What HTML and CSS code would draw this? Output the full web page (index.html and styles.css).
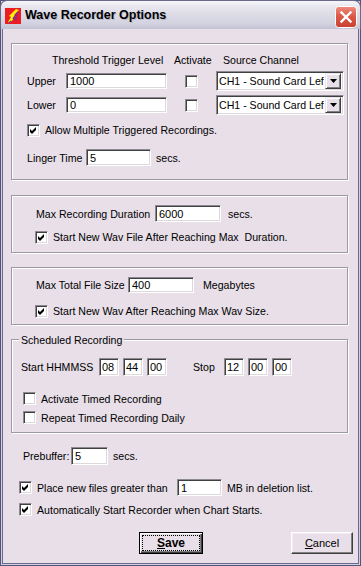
FILE: index.html
```html
<!DOCTYPE html>
<html>
<head>
<meta charset="utf-8">
<title>Wave Recorder Options</title>
<link rel="stylesheet" href="styles.css">
</head>
<body>
<div class="window">
  <div class="titlebar">
    <svg class="app-icon" width="16" height="16" viewBox="0 0 16 16">
      <rect width="16" height="16" fill="#ec1c24"/>
      <polygon points="11,1 14,2 9,7 11,8 5,15 3,14 6,9 4,8" fill="#fff200"/>
      <path d="M13 4 L8 11 M6 13 L4 15 M12 9 L10 12" stroke="#7a2a9a" stroke-width="1.6"/>
    </svg>
    <span class="title">Wave Recorder Options</span>
    <div class="close">
      <svg width="22" height="22" viewBox="0 0 22 22">
        <defs>
          <linearGradient id="red" x1="0" y1="0" x2="0" y2="1">
            <stop offset="0" stop-color="#ee8e80"/>
            <stop offset="0.45" stop-color="#dc5a48"/>
            <stop offset="1" stop-color="#c84030"/>
          </linearGradient>
        </defs>
        <rect x="0.5" y="0.5" width="21" height="21" rx="3" fill="url(#red)" stroke="#fff"/>
        <path d="M6.5 6.5 L15.5 15.5 M15.5 6.5 L6.5 15.5" stroke="#fff" stroke-width="2.4" stroke-linecap="square"/>
      </svg>
    </div>
  </div>

  <div class="client">
    <div class="group trigger">
      <div class="row head">
        <span class="h-level">Threshold Trigger Level</span>
        <span class="h-act">Activate</span>
        <span>Source Channel</span>
      </div>
      <div class="row level">
        <span class="lbl-level">Upper</span>
        <div class="edit level-edit">1000</div>
        <span class="check act"></span>
        <div class="combo">
          <span class="combo-text">CH1 - Sound Card Lef</span>
          <span class="drop"><svg width="7" height="4" viewBox="0 0 7 4"><polygon points="0,0 7,0 3.5,4" fill="#000"/></svg></span>
        </div>
      </div>
      <div class="row level second">
        <span class="lbl-level">Lower</span>
        <div class="edit level-edit">0</div>
        <span class="check act"></span>
        <div class="combo">
          <span class="combo-text">CH1 - Sound Card Lef</span>
          <span class="drop"><svg width="7" height="4" viewBox="0 0 7 4"><polygon points="0,0 7,0 3.5,4" fill="#000"/></svg></span>
        </div>
      </div>
      <div class="row opt allow">
        <span class="check on"><svg width="7" height="7" viewBox="0 0 7 7"><polygon points="0,2 2,4 6,0 6,3 2,7 0,5" fill="#000"/></svg></span>
        <span>Allow Multiple Triggered Recordings.</span>
      </div>
      <div class="row linger">
        <span class="lbl-linger">Linger Time</span>
        <div class="edit linger-edit">5</div>
        <span class="unit">secs.</span>
      </div>
    </div>

    <div class="group limit">
      <div class="row field">
        <span class="lbl-dur">Max Recording Duration</span>
        <div class="edit num-edit">6000</div>
        <span class="unit">secs.</span>
      </div>
      <div class="row opt">
        <span class="check on"><svg width="7" height="7" viewBox="0 0 7 7"><polygon points="0,2 2,4 6,0 6,3 2,7 0,5" fill="#000"/></svg></span>
        <span>Start New Wav File After Reaching Max&nbsp; Duration.</span>
      </div>
    </div>

    <div class="group limit size">
      <div class="row field">
        <span class="lbl-size">Max Total File Size</span>
        <div class="edit num-edit">400</div>
        <span class="unit mb">Megabytes</span>
      </div>
      <div class="row opt">
        <span class="check on"><svg width="7" height="7" viewBox="0 0 7 7"><polygon points="0,2 2,4 6,0 6,3 2,7 0,5" fill="#000"/></svg></span>
        <span>Start New Wav After Reaching Max Wav Size.</span>
      </div>
    </div>

    <div class="group sched">
      <span class="legend">Scheduled Recording</span>
      <div class="row time">
        <span class="lbl-start">Start HHMMSS</span>
        <div class="edit t-edit">08</div>
        <div class="edit t-edit">44</div>
        <div class="edit t-edit">00</div>
        <span class="lbl-stop">Stop</span>
        <div class="edit t-edit">12</div>
        <div class="edit t-edit">00</div>
        <div class="edit t-edit">00</div>
      </div>
      <div class="row opt timed">
        <span class="check"></span>
        <span>Activate Timed Recording</span>
      </div>
      <div class="row opt timed daily">
        <span class="check"></span>
        <span>Repeat Timed Recording Daily</span>
      </div>
    </div>

    <div class="row prebuffer">
      <span class="lbl-pre">Prebuffer:</span>
      <div class="edit pre-edit">5</div>
      <span class="unit">secs.</span>
    </div>
    <div class="row opt place">
      <span class="check on"><svg width="7" height="7" viewBox="0 0 7 7"><polygon points="0,2 2,4 6,0 6,3 2,7 0,5" fill="#000"/></svg></span>
      <span class="lbl-place">Place new files greater than</span>
      <div class="edit mb-edit">1</div>
      <span class="unit">MB in deletion list.</span>
    </div>
    <div class="row opt auto">
      <span class="check on"><svg width="7" height="7" viewBox="0 0 7 7"><polygon points="0,2 2,4 6,0 6,3 2,7 0,5" fill="#000"/></svg></span>
      <span>Automatically Start Recorder when Chart Starts.</span>
    </div>

    <div class="row buttons">
      <div class="btn default"><span class="focus"><u>S</u>ave</span></div>
      <div class="btn cancel"><u>C</u>ancel</div>
    </div>
  </div>
</div>
</body>
</html>
```

FILE: styles.css
```css
* {
  margin: 0;
  padding: 0;
  box-sizing: border-box;
}

body {
  background: #fff;
  font-family: "Liberation Sans", Arial, sans-serif;
  font-size: 10.6px;
  color: #000;
}

.window {
  width: 361px;
  height: 566px;
  background: #e8dfe8;
  box-shadow: inset 0 0 0 1px #55557a, inset 0 0 0 2px #cfcfe0, inset 0 0 0 3px #6c6c90;
}

/* title bar */
.titlebar {
  height: 29px;
  display: flex;
  align-items: center;
  border: 1px solid #6a6a8c;
  border-bottom: none;
  border-radius: 7px 7px 0 0;
  background: linear-gradient(to bottom, #f7f7fb 0%, #e9e8f0 18%, #dcdbe6 50%, #d3d2e0 80%, #c4c3d4 100%);
}

.app-icon {
  margin-left: 4px;
  margin-top: 1px;
}

.title {
  margin-left: 4px;
  font-weight: bold;
  font-size: 12.5px;
  text-shadow: 1px 1px 0 rgba(120, 120, 150, 0.35);
}

.close {
  margin-left: auto;
  margin-right: 3px;
  margin-top: 3px;
  height: 22px;
}

/* client area */
.client {
  padding: 14px 13px 0 11px;
}

.row {
  display: flex;
  align-items: center;
  white-space: nowrap;
}

.row > span {
  flex: none;
}

.group {
  border: 1px solid #9c98a4;
  box-shadow: inset 1px 1px #fff, 1px 1px #fff;
}

/* sunken controls */
.edit {
  flex: none;
  background: #fff;
  border: 1px solid;
  border-color: #8c8a90 #fff #fff #8c8a90;
  box-shadow: inset 1px 1px #404040, inset -1px -1px #dcd8dc;
  padding: 0 3px;
  display: flex;
  align-items: center;
  white-space: nowrap;
  font-size: 11px;
}

.check {
  width: 13px;
  height: 13px;
  flex: none;
  background: #fff;
  border: 1px solid;
  border-color: #8c8a90 #fff #fff #8c8a90;
  box-shadow: inset 1px 1px #404040, inset -1px -1px #dcd8dc;
  display: flex;
  align-items: center;
  justify-content: center;
}

.opt .check {
  margin-right: 5px;
}

/* threshold group */
.trigger {
  height: 137px;
  padding-top: 9px;
}

.head {
  height: 14px;
  padding-left: 40px;
}

.h-level {
  width: 122px;
}

.h-act {
  width: 49px;
}

.level {
  height: 20px;
  margin-top: 4px;
  padding-left: 15px;
}

.lbl-level {
  width: 39px;
}

.level-edit {
  width: 101px;
  height: 16px;
}

.act {
  margin-left: 18px;
}

.combo {
  flex: none;
  width: 128px;
  height: 20px;
  margin-left: 18px;
  background: #fff;
  border: 1px solid;
  border-color: #8c8a90 #fff #fff #8c8a90;
  box-shadow: inset 1px 1px #404040, inset -1px -1px #dcd8dc;
  padding: 2px;
  display: flex;
  align-items: center;
}

.combo-text {
  flex: 1;
  overflow: hidden;
  white-space: nowrap;
  font-size: 10.6px;
}

.drop {
  width: 16px;
  height: 16px;
  flex: none;
  background: #e8dfe8;
  border: 1px solid;
  border-color: #e8e4ec #404040 #404040 #e8e4ec;
  box-shadow: inset 1px 1px #fff, inset -1px -1px #808080;
  display: flex;
  align-items: center;
  justify-content: center;
}

.allow {
  height: 14px;
  margin-top: 8px;
  padding-left: 15px;
}

.linger {
  height: 17px;
  margin-top: 12px;
  padding-left: 15px;
}

.lbl-linger {
  width: 59px;
}

.linger-edit {
  width: 65px;
  height: 17px;
}

.unit {
  margin-left: 5px;
}

/* duration / size groups */
.limit {
  height: 58px;
  margin-top: 15px;
  padding-top: 9px;
}

.limit.size {
  margin-top: 14px;
}

.field {
  height: 17px;
  padding-left: 24px;
}

.size .field {
  height: 16px;
}

.lbl-dur {
  width: 119px;
}

.lbl-size {
  width: 92px;
}

.num-edit {
  width: 66px;
  height: 100%;
}

.field .unit {
  margin-left: 7px;
}

.field .unit.mb {
  margin-left: 9px;
}

.limit .opt {
  height: 14px;
  margin-top: 8px;
  padding-left: 23px;
}

.size .opt {
  margin-top: 11px;
}

/* scheduled group */
.sched {
  height: 94px;
  margin-top: 14px;
}

.legend {
  display: block;
  width: fit-content;
  margin: -7px 0 0 7px;
  padding: 0 2px;
  line-height: 14px;
  background: #e8dfe8;
}

.time {
  height: 18px;
  margin-top: 11px;
  padding-left: 9px;
}

.lbl-start {
  width: 78px;
}

.t-edit {
  width: 20px;
  height: 18px;
  margin-right: 4px;
  padding: 0 2px;
}

.lbl-stop {
  width: 31px;
  margin-left: 22px;
}

.timed {
  height: 13px;
  margin-top: 16px;
  padding-left: 11px;
}

.timed.daily {
  margin-top: 6px;
}

/* bottom options */
.prebuffer {
  height: 18px;
  margin-top: 14px;
  padding-left: 12px;
}

.lbl-pre {
  width: 48px;
}

.pre-edit {
  width: 37px;
  height: 18px;
}

.place {
  height: 17px;
  margin-top: 14px;
  padding-left: 8px;
}

.lbl-place {
  width: 140px;
}

.mb-edit {
  width: 45px;
  height: 17px;
}

.auto {
  height: 13px;
  margin-top: 7px;
  padding-left: 8px;
}

/* buttons */
.buttons {
  height: 22px;
  margin-top: 16px;
  padding-left: 128px;
}

.btn {
  flex: none;
  height: 22px;
  background: #e8dfe8;
  border: 1px solid;
  border-color: #fff #404040 #404040 #fff;
  box-shadow: inset -1px -1px #808080, inset 1px 1px #f0ecf0;
  display: flex;
  align-items: center;
  justify-content: center;
  font-size: 11px;
}

.btn.default {
  width: 64px;
  border: 1px solid #000;
  box-shadow: inset 1px 1px #fff, inset -1px -1px #404040, inset -2px -2px #808080;
  font-weight: bold;
  font-size: 12px;
}

.focus {
  width: 58px;
  height: 16px;
  border: 1px dotted #000;
  display: flex;
  align-items: center;
  justify-content: center;
}

.btn.cancel {
  width: 62px;
  margin-left: 88px;
}
```
